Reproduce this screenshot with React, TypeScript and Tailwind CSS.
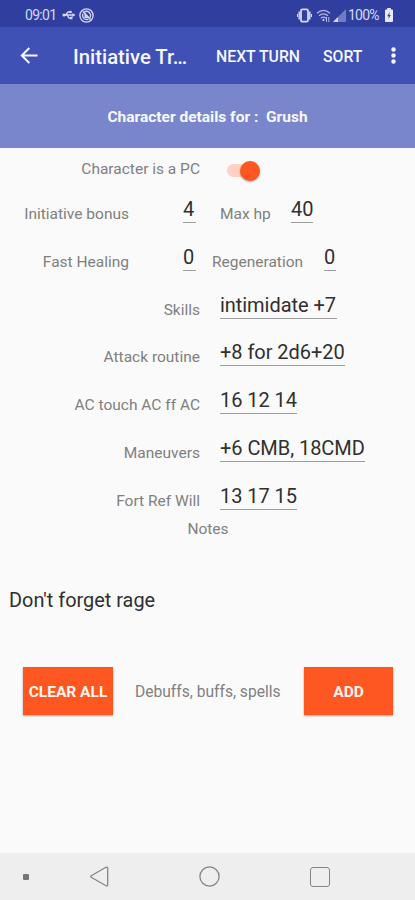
import React, { useState } from "react";

interface FieldValueProps {
  value: string;
  className?: string;
}

const FieldLabel: React.FC<{ children: string; className?: string }> = ({ children, className = "" }) => (
  <span className={`shrink-0 whitespace-nowrap pt-[15px] text-right text-[15.5px] leading-[18px] text-[#808080] ${className}`}>
    {children}
  </span>
);

// Single line input with the material underline
const FieldValue: React.FC<FieldValueProps> = ({ value, className = "" }) => (
  <span
    className={`mt-[6px] h-[27px] shrink-0 whitespace-nowrap border-b border-[#9c9c9c] pt-px text-[20px] leading-6 tracking-[-0.05px] text-[#303030] ${className}`}
  >
    {value}
  </span>
);

const DETAILS = [
  { label: "Skills", value: "intimidate +7", width: "w-[117px]" },
  { label: "Attack routine", value: "+8 for 2d6+20", width: "w-[125px]" },
  { label: "AC touch AC ff AC", value: "16 12 14", width: "w-[77px]" },
  { label: "Maneuvers", value: "+6 CMB, 18CMD", width: "w-[145px]" },
  { label: "Fort Ref Will", value: "13 17 15", width: "w-[77px]" },
];

const StatusBar = () => (
  <div className="flex h-[27px] items-center bg-[#303f9f] pl-[25px] pr-[22px] pt-[3px] text-[14px] leading-4 text-[#d5d9f2]">
    <span className="w-[37px] tracking-[-0.7px]">09:01</span>
    <svg className="h-[12px] w-[14px]" viewBox="0 0 14 12" fill="none" stroke="currentColor" strokeWidth="1.3">
      <path d="M2 6h9M3.5 6l2.5-3h2M5 6l2 3h2" />
      <circle cx="2" cy="6" r="1.6" fill="currentColor" stroke="none" />
      <circle cx="8.6" cy="3" r="1.3" fill="currentColor" stroke="none" />
      <path d="M8 7.7h2.5v2.5H8zM10.5 4l3 2-3 2z" fill="currentColor" stroke="none" />
    </svg>
    <svg className="ml-[3px] h-[15px] w-[15px]" viewBox="0 0 15 15" fill="none" stroke="currentColor">
      <circle cx="7.5" cy="7.5" r="6.6" strokeWidth="1.3" />
      <path d="M5 4.3a4 4 0 0 1 5.8 5.4M9.5 11A4 4 0 0 1 4 5.800" strokeWidth="1.3" />
      <path d="M4 3.5l7.5 8M6.3 6v3.3h3" strokeWidth="1.6" />
    </svg>
    <div className="ml-auto flex items-center">
      <svg className="h-[15px] w-[15px]" viewBox="0 0 15 15" fill="none" stroke="currentColor">
        <rect x="4" y="1.3" width="7" height="12.4" rx="1.5" strokeWidth="1.8" />
        <path d="M2.2 3.5v8M12.8 3.5v8" strokeWidth="1.5" />
        <path d="M.5 6v3M14.5 6v3" strokeWidth="1" />
      </svg>
      <svg className="ml-[4px] h-[13px] w-[15px]" viewBox="0 0 15 13" fill="none" stroke="currentColor" strokeWidth="1.2">
        <path d="M1 4.2c4-3.4 9-3.4 13 0M3 6.8c2.7-2.3 6.3-2.3 9 0M5 9.2c1.5-1.3 3.5-1.3 5 0" opacity=".8" />
        <circle cx="7.5" cy="11" r="1.1" fill="currentColor" stroke="none" />
        <path d="M10.5 8v5M12.8 8v5" strokeWidth="1" opacity=".8" />
      </svg>
      <svg className="ml-[2px] h-[13px] w-[13px]" viewBox="0 0 13 13" fill="currentColor">
        <path d="M0 13L13 0v13z" opacity=".4" />
        <path d="M0 13l5-5v5z" />
      </svg>
      <span className="ml-[2px] w-[37px] tracking-[-0.8px]">100%</span>
      <svg className="h-[14px] w-[8px]" viewBox="0 0 9 14" preserveAspectRatio="none">
        <path d="M2.5 0h4v1.5H8q1 0 1 1V13q0 1-1 1H1q-1 0-1-1V2.5q0-1 1-1h1.5z" fill="#e8eafa" />
        <path d="M5.3 4L2.5 8.2h1.8L3.7 11.3 6.5 7H4.8z" fill="#303f9f" />
      </svg>
    </div>
  </div>
);

const Toolbar = () => (
  <header className="flex h-[57px] items-center bg-[#3f51b5] pl-[20px] pr-[19px] font-medium text-[#f5f6ff]">
    <svg className="h-[17px] w-[18px]" viewBox="0 0 18 17" fill="none" stroke="currentColor" strokeWidth="2">
      <path d="M17.5 8.5H2M9.3 1L1.8 8.5 9.3 16" />
    </svg>
    <h1 className="ml-[35px] w-[143px] whitespace-nowrap pt-[2px] text-[20.3px] leading-6">Initiative Tr…</h1>
    <button className="w-[107px] whitespace-nowrap pt-[2px] text-left text-[15.8px] leading-5">NEXT TURN</button>
    <button className="pt-[2px] text-left text-[15.8px] leading-5">SORT</button>
    <svg className="ml-auto h-[17px] w-[5px]" viewBox="0 0 5 17" fill="currentColor">
      <circle cx="2.5" cy="2.5" r="2.2" />
      <circle cx="2.5" cy="8.5" r="2.2" />
      <circle cx="2.5" cy="14.5" r="2.2" />
    </svg>
  </header>
);

const NavigationBar = () => (
  <nav className="mt-auto flex h-[47px] items-center bg-[#eeeeee] pl-[23px] text-[#858585]">
    <div className="h-[6px] w-[6px] rounded-[1px] bg-[#757575]" />
    <svg className="ml-[61px] h-[21px] w-[19px]" viewBox="0 0 19 21" fill="none" stroke="currentColor" strokeWidth="1.3">
      <path d="M1.2 9.7L16 1.3q1.7-.7 1.7 1v16.4q0 1.7-1.7 1L1.2 11.3q-1-.8 0-1.6z" />
    </svg>
    <svg className="ml-[90px] h-[21px] w-[21px]" viewBox="0 0 21 21" fill="none" stroke="currentColor" strokeWidth="1.3">
      <circle cx="10.5" cy="10.5" r="9.6" />
    </svg>
    <div className="ml-[90px] h-[20px] w-[20px] rounded-[3px] border-[1.5px] border-current" />
  </nav>
);

export default function App() {
  const [isPc, setIsPc] = useState(true);

  return (
    <div className="flex h-[900px] w-full flex-col overflow-hidden bg-[#fafafa] font-['Roboto',sans-serif]">
      <StatusBar />
      <Toolbar />
      <div className="flex h-[64px] items-center justify-center bg-[#7986cb] pt-[4px] text-[15.5px] font-bold text-[#f7f8ff]">
        <span className="whitespace-pre">Character details for :  Grush</span>
      </div>

      <main>
        <div className="flex h-[42px]">
          <span className="w-[200px] whitespace-nowrap pt-[12px] text-right text-[15.5px] leading-[18px] text-[#808080]">
            Character is a PC
          </span>
          <button
            role="switch"
            aria-checked={isPc}
            aria-label="Character is a PC"
            onClick={() => setIsPc(!isPc)}
            className={`mt-[16px] ml-[27px] flex h-[13px] w-[33px] items-center rounded-full bg-[#ffd1c2] ${isPc ? "justify-end" : "justify-start"}`}
          >
            <span className="h-[20px] w-[20px] rounded-full bg-[#ff5722] shadow-[0_1px_2px_rgba(0,0,0,0.3)]" />
          </button>
        </div>

        {/* Number fields */}
        <div className="flex h-[47.8px]">
          <FieldLabel className="w-[129px]">Initiative bonus</FieldLabel>
          <FieldValue value="4" className="ml-[54px] w-[13px]" />
          <FieldLabel className="ml-[24px] w-[50px]">Max hp</FieldLabel>
          <FieldValue value="40" className="ml-[21px] w-[22px]" />
        </div>
        <div className="flex h-[47.8px]">
          <FieldLabel className="w-[129px]">Fast Healing</FieldLabel>
          <FieldValue value="0" className="ml-[54px] w-[13px]" />
          <FieldLabel className="ml-[16px] w-[91px]">Regeneration</FieldLabel>
          <FieldValue value="0" className="ml-[21px] w-[12px]" />
        </div>

        {/* Text fields */}
        {DETAILS.map((field) => (
          <div key={field.label} className="flex h-[47.8px]">
            <FieldLabel className="w-[200px]">{field.label}</FieldLabel>
            <FieldValue value={field.value} className={`ml-[20px] ${field.width}`} />
          </div>
        ))}

        <p className="-mt-[4.6px] pl-px text-center text-[15.5px] leading-[18px] text-[#808080]">Notes</p>
        <p className="mt-[51px] pl-[9px] text-[19.9px] leading-6 text-[#303030]">Don't forget rage</p>

        <div className="mt-[54px] flex items-center pl-[23px] leading-5">
          <button className="h-[48px] w-[90px] whitespace-nowrap bg-[#ff5722] pt-[2px] text-[15.5px] font-bold text-[#fff5f0] shadow-[0_1px_2px_rgba(0,0,0,0.35)]">
            CLEAR ALL
          </button>
          <span className="ml-[22px] w-[169px] whitespace-nowrap pt-[3px] text-[15.6px] text-[#808080]">
            Debuffs, buffs, spells
          </span>
          <button className="h-[48px] w-[89px] bg-[#ff5722] pt-[2px] text-[15.5px] font-bold text-[#fff5f0] shadow-[0_1px_2px_rgba(0,0,0,0.35)]">
            ADD
          </button>
        </div>
      </main>

      <NavigationBar />
    </div>
  );
}
